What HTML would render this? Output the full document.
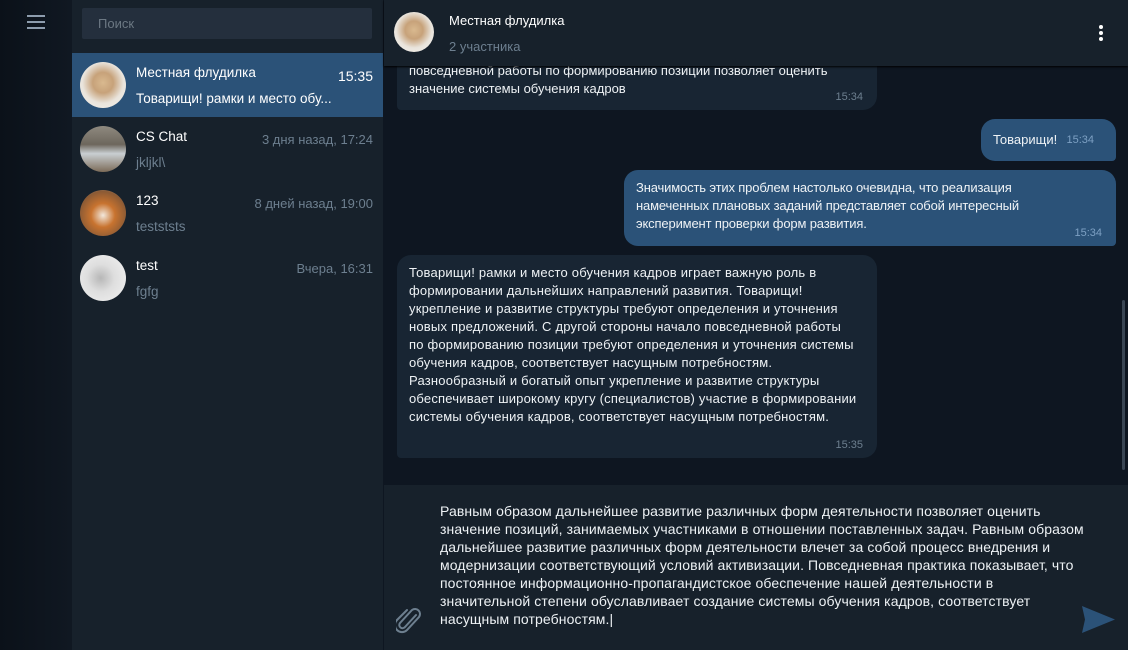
<!DOCTYPE html>
<html><head><meta charset="utf-8"><style>
*{margin:0;padding:0;box-sizing:border-box}
body{width:1128px;height:650px;overflow:hidden;background:#0e1621;font-family:"Liberation Sans",sans-serif;position:relative;color:#e9edf1}
.rail{position:absolute;left:0;top:0;width:72px;height:650px;background:linear-gradient(90deg,#0b1119,#101822)}
.burger{position:absolute;left:27px;top:15px;width:18px}
.burger i{display:block;height:2px;background:#8d9cad;margin-bottom:4px}
.side{position:absolute;left:72px;top:0;width:311px;height:650px;background:#17212b}
.search{position:absolute;left:10px;top:8px;width:290px;height:31px;background:#242f3d;border-radius:2px;color:#6c7883;font-size:13px;padding:8px 16px}
.row{position:absolute;left:0;width:311px;height:64px}
.row.sel{background:#2b5278}
.av{position:absolute;left:8px;top:9px;width:46px;height:46px;border-radius:50%}
.nm{position:absolute;left:64px;top:12px;font-size:13.5px;color:#fff}
.tm{position:absolute;right:10px;top:15px;font-size:13px;color:#6d7f8f}
.sel .tm{color:#fff;font-size:14px;top:15px}
.pv{position:absolute;left:64px;top:38px;font-size:13.5px;color:#6d7f8f}
.sel .pv{color:#fff}
.hdr{position:absolute;left:384px;top:0;width:744px;height:66px;background:#17212b;z-index:2;box-shadow:0 1px 2px #000}
.msg{position:absolute;font-size:13px;letter-spacing:0;line-height:18px;color:#eef2f5;white-space:nowrap;border-radius:14px;padding:9px 12px}
.in{background:#182533;border-radius:14px 14px 14px 4px}
.out{background:#2b5278;border-radius:14px 14px 4px 14px}
.t{position:absolute;right:14px;bottom:4px;font-size:11px;color:#6d7f8f;letter-spacing:0}
.out .t{color:#7da0c3}
.input{position:absolute;left:384px;top:485px;width:744px;height:165px;background:#17212b}
</style></head><body>
<div class="rail"><div class="burger"><i></i><i></i><i></i></div></div>
<div class="side">
<div class="search">Поиск</div>
<div class="row sel" style="top:53px"><div class="av" style="background:radial-gradient(circle at 50% 45%,#d9b98f 0,#c7a27a 30%,#e9e4dc 60%,#f5f3ef 100%)"></div><div class="nm">Местная флудилка</div><div class="tm">15:35</div><div class="pv">Товарищи! рамки и место обу...</div></div>
<div class="row" style="top:117px"><div class="av" style="background:linear-gradient(180deg,#8f8a80 0,#6d665c 40%,#c9cfd2 60%,#7c6b58 100%)"></div><div class="nm">CS Chat</div><div class="tm">3 дня назад, 17:24</div><div class="pv">jkljkl\</div></div>
<div class="row" style="top:181px"><div class="av" style="background:radial-gradient(circle at 50% 55%,#f2e8dc 0,#c8732f 35%,#8a5a35 70%,#cfc8be 100%)"></div><div class="nm">123</div><div class="tm">8 дней назад, 19:00</div><div class="pv">testststs</div></div>
<div class="row" style="top:246px"><div class="av" style="background:radial-gradient(circle at 45% 50%,#b7b7b7 0,#dedede 40%,#f3f3f3 100%)"></div><div class="nm">test</div><div class="tm">Вчера, 16:31</div><div class="pv">fgfg</div></div>
</div>
<div class="hdr">
<div style="position:absolute;left:10px;top:12px;width:40px;height:40px;border-radius:50%;background:radial-gradient(circle at 50% 45%,#d9b98f 0,#c7a27a 30%,#e9e4dc 60%,#f5f3ef 100%)"></div>
<div style="position:absolute;left:65px;top:13px;font-size:13px;color:#fff">Местная флудилка</div>
<div style="position:absolute;left:65px;top:39px;font-size:13px;color:#6d7f8f">2 участника</div>
<div style="position:absolute;left:715px;top:25px;width:4px">
<i style="display:block;width:4px;height:4px;border-radius:2px;background:#fff;margin-bottom:2px"></i><i style="display:block;width:4px;height:4px;border-radius:2px;background:#fff;margin-bottom:2px"></i><i style="display:block;width:4px;height:4px;border-radius:2px;background:#fff"></i></div>
</div>
<div class="msg in" style="left:397px;top:35px;width:480px;height:75px;padding-top:27px">повседневной работы по формированию позиции позволяет оценить<br>значение системы обучения кадров<span class="t">15:34</span></div>
<div class="msg out" style="left:981px;top:119px;width:135px;height:42px;padding-top:12px">Товарищи!<span class="t" style="bottom:12px;right:22px">15:34</span></div>
<div class="msg out" style="left:624px;top:170px;width:492px;height:76px;letter-spacing:-0.15px">Значимость этих проблем настолько очевидна, что реализация<br>намеченных плановых заданий представляет собой интересный<br>эксперимент проверки форм развития.<span class="t">15:34</span></div>
<div class="msg in" style="left:397px;top:255px;width:480px;height:203px;letter-spacing:0.2px">Товарищи! рамки и место обучения кадров играет важную роль в<br>формировании дальнейших направлений развития. Товарищи!<br>укрепление и развитие структуры требуют определения и уточнения<br>новых предложений. С другой стороны начало повседневной работы<br>по формированию позиции требуют определения и уточнения системы<br>обучения кадров, соответствует насущным потребностям.<br>Разнообразный и богатый опыт укрепление и развитие структуры<br>обеспечивает широкому кругу (специалистов) участие в формировании<br>системы обучения кадров, соответствует насущным потребностям.<span class="t">15:35</span></div>
<div style="position:absolute;left:1122px;top:300px;width:3px;height:170px;background:#3a4654;border-radius:2px"></div>
<div class="input">
<div class="msg" style="left:56px;top:17px;padding:0;font-size:14px;letter-spacing:0.1px">Равным образом дальнейшее развитие различных форм деятельности позволяет оценить<br>значение позиций, занимаемых участниками в отношении поставленных задач. Равным образом<br>дальнейшее развитие различных форм деятельности влечет за собой процесс внедрения и<br>модернизации соответствующий условий активизации. Повседневная практика показывает, что<br>постоянное информационно-пропагандистское обеспечение нашей деятельности в<br>значительной степени обуславливает создание системы обучения кадров, соответствует<br>насущным потребностям.|</div>
<svg style="position:absolute;left:12px;top:120px" width="26" height="30" viewBox="0 0 26 30"><path d="M20 10 L9 22 a3 3 0 0 1 -5 -4 L16 5 a5 5 0 0 1 7 7 L11 25 a7 7 0 0 1 -10 -10 L11 5" fill="none" stroke="#6d7f8f" stroke-width="2" stroke-linecap="round"/></svg>
<svg style="position:absolute;left:698px;top:121px" width="33" height="27" viewBox="0 0 33 27"><path d="M0 0 L33 13.5 L0 27 L3 13.5 Z" fill="#2b5278"/></svg>
</div>
</body></html>
